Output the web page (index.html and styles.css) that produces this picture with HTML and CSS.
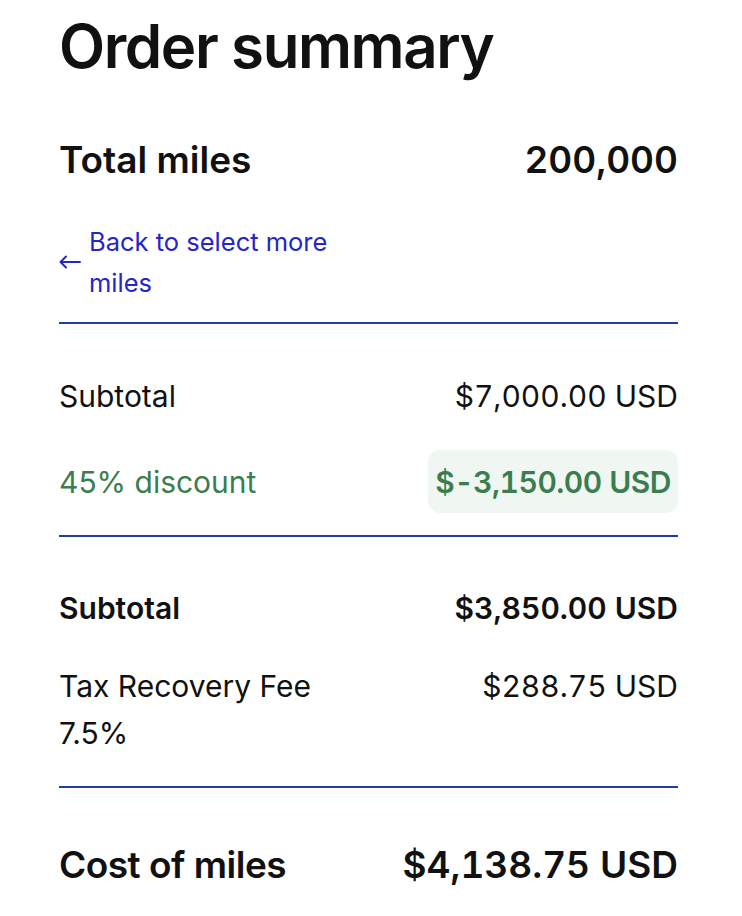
FILE: index.html
```html
<!DOCTYPE html>
<html lang="en">
<head>
  <meta charset="UTF-8">
  <meta name="viewport" content="width=device-width, initial-scale=1.0">
  <title>Order summary</title>
  <link rel="stylesheet" href="styles.css">
</head>
<body>
  <div class="summary">
    <h1>Order summary</h1>

    <div class="row total-miles">
      <span>Total miles</span>
      <span class="amount">200,000</span>
    </div>

    <a class="back-link" href="#">
      <svg class="arrow" width="22" height="14" viewBox="0 0 22 14" fill="none" stroke="currentColor" stroke-width="2" stroke-linecap="round" stroke-linejoin="round">
        <path d="M21 7H2M7 1.5L1.5 7L7 12.5"/>
      </svg>
      <span class="back-text">Back to select more miles</span>
    </a>

    <div class="section">
      <div class="row">
        <span>Subtotal</span>
        <span class="amount">$7,000.00 USD</span>
      </div>
      <div class="row discount">
        <span>45% discount</span>
        <span class="badge amount">$-3,150.00 USD</span>
      </div>
    </div>

    <div class="section second">
      <div class="row strong">
        <span>Subtotal</span>
        <span class="amount">$3,850.00 USD</span>
      </div>
      <div class="row fee">
        <span class="fee-label">Tax Recovery Fee 7.5%</span>
        <span class="amount">$288.75 USD</span>
      </div>
    </div>

    <div class="row grand-total">
      <span>Cost of miles</span>
      <span class="amount">$4,138.75 USD</span>
    </div>
  </div>
</body>
</html>
```

FILE: styles.css
```css
body {
  font-family: Inter, "Liberation Sans", sans-serif;
  color: #111;
  background: white;
  margin: 0;
  padding: 0;
}
.summary {
  margin: 0 64px 0 59px;
}
h1 {
  font-size: 60px;
  font-weight: 600;
  letter-spacing: -1.4px;
  margin: 8px 0 0;
  line-height: 76px;
}
.row {
  display: flex;
  justify-content: space-between;
  align-items: flex-start;
  font-size: 30px;
  line-height: 40px;
}
.amount {
  font-variant-numeric: tabular-nums;
}
.total-miles {
  font-size: 37px;
  line-height: 46px;
  font-weight: 600;
  margin-top: 53px;
}
.back-link {
  display: flex;
  align-items: center;
  gap: 8px;
  margin-top: 38px;
  padding-bottom: 19px;
  border-bottom: 2px solid #1f3fa6;
  color: #2525c9;
  text-decoration: none;
  font-size: 25.5px;
  line-height: 41px;
}
.back-text {
  max-width: 250px;
}
.arrow {
  flex-shrink: 0;
}
.section {
  padding: 52px 0 22px;
  border-bottom: 2px solid #1f3fa6;
}
.discount {
  align-items: center;
  margin-top: 34px;
  color: #3b7d4f;
}
.badge {
  background: #f0f7f2;
  border-radius: 12px;
  padding: 12px 7px 11px;
  font-weight: 600;
  letter-spacing: -0.5px;
}
.second {
  padding: 51px 0 29px;
}
.strong {
  font-weight: 600;
}
.fee {
  margin-top: 35px;
  line-height: 47px;
}
.fee-label {
  max-width: 260px;
}
.grand-total {
  font-size: 37px;
  line-height: 46px;
  font-weight: 600;
  margin-top: 54px;
}
.grand-total span:first-child {
  letter-spacing: -0.5px;
}
```
